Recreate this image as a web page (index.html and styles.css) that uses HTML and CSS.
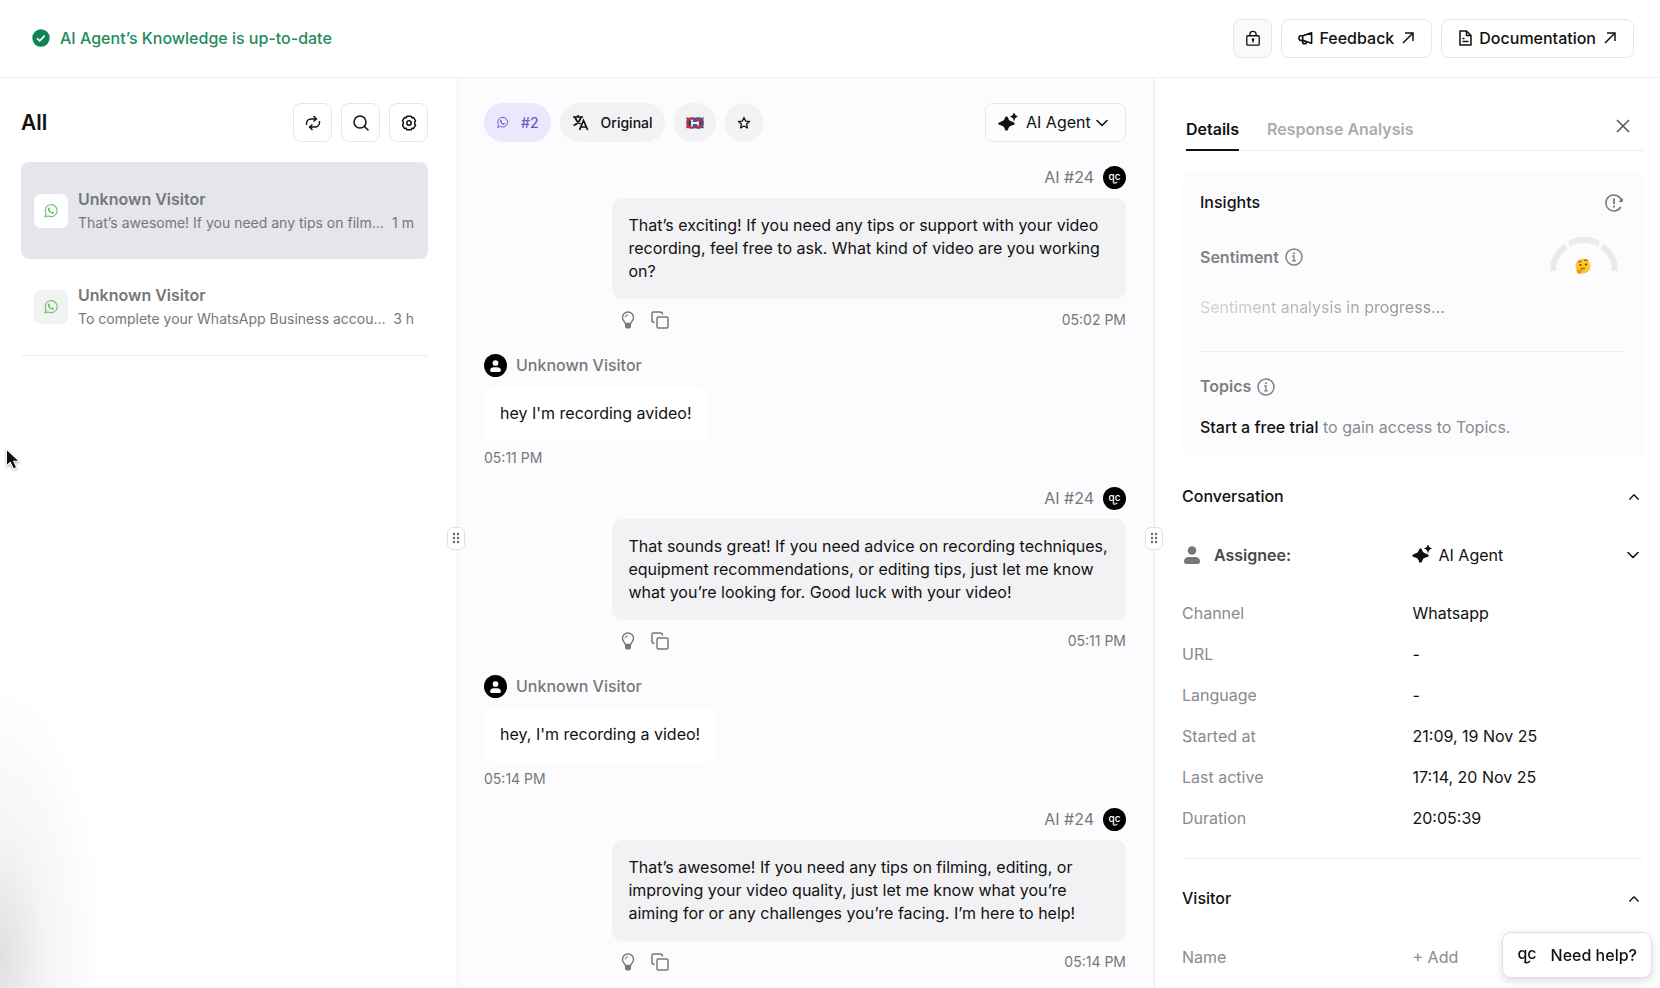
FILE: index.html
```html
<!DOCTYPE html>
<html lang="en">
<head>
    <meta charset="UTF-8">
    <meta name="viewport" content="width=device-width, initial-scale=1.0">
    <title>Inbox</title>
    <link rel="stylesheet" href="styles.css">
</head>
<body>
    <!-- shared icons -->
    <svg class="sprite" aria-hidden="true">
        <symbol id="whatsapp" viewBox="0 0 24 24">
            <path d="M3 21l1.6-4.8A9 9 0 1 1 8 19.4z" fill="none" stroke="currentColor" stroke-width="1.8" stroke-linejoin="round"/>
            <path d="M8.3 7.2c.7-.6 1.4-.4 1.7.3l.6 1.4c.2.5-.5 1-.8 1.5.7 1.5 1.8 2.6 3.4 3.3.5-.4 1-1.2 1.5-.9l1.5.8c.7.4.5 1.1 0 1.7-1 1.1-2.5 1-4.2.2-2.2-1-3.8-2.7-4.5-4.7-.4-1.400-.2-2.800.8-3.600z" fill="currentColor"/>
        </symbol>
        <symbol id="sparkle" viewBox="0 0 20 20">
            <path d="M8.500 3.500c.8 0 1.200.5 1.500 1.200.7 2.300 1.600 3.200 3.800 3.900l2 .8c1.200.5 1.200 1.900 0 2.400l-2 .8c-2.200.7-3.100 1.600-3.800 3.900-.5 1.600-2.500 1.600-3 0-.7-2.300-1.600-3.200-3.800-3.900l-2-.8c-1.200-.5-1.200-1.900 0-2.400l2-.8C5.400 7.900 6.300 7 7 4.700c.3-.7.7-1.200 1.500-1.200z"/>
            <path d="M16 1c.4 1.500.7 1.900 2.200 2.500C16.700 4.100 16.400 4.500 16 6c-.4-1.500-.7-1.900-2.200-2.500C15.300 2.900 15.600 2.500 16 1z" stroke="currentColor" stroke-width="1.400"/>
        </symbol>
        <symbol id="chevron" viewBox="0 0 14 14">
            <path d="M2 4.500l5 5 5-5" fill="none" stroke="currentColor" stroke-width="1.600" stroke-linecap="round" stroke-linejoin="round"/>
        </symbol>
        <symbol id="arrow" viewBox="0 0 14 14">
            <path d="M2 12L12 2M4 2h8v8" fill="none" stroke="currentColor" stroke-width="1.500"/>
        </symbol>
        <symbol id="info" viewBox="0 0 18 18">
            <circle cx="9" cy="9" r="8" fill="none" stroke="currentColor" stroke-width="1.500"/>
            <path d="M7.300 8H9v4.800M7 12.800h4" fill="none" stroke="currentColor" stroke-width="1.300"/>
            <circle cx="9" cy="5.300" r="1"/>
        </symbol>
        <symbol id="bulb" viewBox="0 0 18 18">
            <path d="M6.300 12.500C6 10.700 3.500 9.500 3.500 6.500a5.500 5.500 0 0 1 11 0c0 3-2.500 4.200-2.800 6z" fill="none" stroke="currentColor" stroke-width="1.400"/>
            <path d="M6 13h6v2.500a2 2 0 0 1-2 2H8a2 2 0 0 1-2-2z"/>
            <path d="M6.200 6.500A2.700 2.700 0 0 1 9 3.900" fill="none" stroke="currentColor"/>
        </symbol>
        <symbol id="copy" viewBox="0 0 18 18">
            <rect x="6" y="6" width="11" height="11" rx="1.500" fill="none" stroke="currentColor" stroke-width="1.500"/>
            <path d="M3.500 11.500A2.500 2.500 0 0 1 1 9V2.500A1.500 1.500 0 0 1 2.500 1H9a2.500 2.500 0 0 1 2.500 2.500" fill="none" stroke="currentColor" stroke-width="1.500"/>
        </symbol>
        <symbol id="person" viewBox="0 0 16 18">
            <circle cx="8" cy="4.500" r="4.300"/>
            <path d="M0 15.500C0 12 3 11 5 11h6c2 0 5 1 5 4.500C16 17 15.300 18 14 18H2c-1.300 0-2-1-2-2.500z"/>
        </symbol>
        <symbol id="grip" viewBox="0 0 8 12">
            <circle cx="2" cy="2" r="1.200"/><circle cx="6" cy="2" r="1.200"/>
            <circle cx="2" cy="6" r="1.200"/><circle cx="6" cy="6" r="1.200"/>
            <circle cx="2" cy="10" r="1.200"/><circle cx="6" cy="10" r="1.200"/>
        </symbol>
        <symbol id="smile" viewBox="0 0 8 4">
            <path d="M1 2q3.500 2 6-1" fill="none" stroke="currentColor" stroke-width="1.400"/>
        </symbol>
    </svg>

    <header class="topbar">
        <div class="status">
            <svg width="18" height="18" viewBox="0 0 18 18"><circle cx="9" cy="9" r="8.700" fill="#0d8552"/><path d="M5 9.300l2.700 2.600 5-5.200" fill="none" stroke="#fff" stroke-width="1.700"/></svg>
            <span>AI Agent’s Knowledge is up-to-date</span>
        </div>
        <nav class="topbar-actions">
            <button class="btn icon-btn muted" aria-label="Privacy">
                <svg width="16" height="16" viewBox="0 0 16 18" fill="none" stroke="currentColor" stroke-width="1.500"><rect x="1" y="6.500" width="14" height="10.500" rx="1"/><path d="M4.500 6.500V5a3.500 3.500 0 0 1 7 0v1.500M8 11v3"/><circle cx="8" cy="10.800" r=".8"/></svg>
            </button>
            <a class="btn" href="#">
                <svg width="15" height="15" viewBox="0 0 16 16" fill="none" stroke="currentColor" stroke-width="1.700" stroke-linejoin="round"><path d="M5 5l9.500-3v11L5 10H2.800C1.500 10 1 9 1 7.500S1.500 5 2.800 5zM5 5v5M4.500 10.500l1 3h3l.8-1.800"/></svg>
                <span>Feedback</span>
                <svg class="out" width="14" height="14"><use href="#arrow"/></svg>
            </a>
            <a class="btn" href="#">
                <svg width="15" height="16" viewBox="0 0 15 16" fill="none" stroke="currentColor" stroke-width="1.500" stroke-linejoin="round"><path d="M2 1h6.500L13 5.500V15H2zM8.500 1v4.500H13M4.500 8.500h2M4.500 11.500h6"/></svg>
                <span>Documentation</span>
                <svg class="out" width="14" height="14"><use href="#arrow"/></svg>
            </a>
        </nav>
    </header>

    <main class="layout">
        <aside class="inbox">
            <div class="inbox-head">
                <h1>All</h1>
                <button class="btn icon-btn" aria-label="Refresh">
                    <svg width="16" height="16" viewBox="0 0 16 16" fill="none" stroke="currentColor" stroke-width="1.400"><path d="M1.500 10V8.500A4.500 4.500 0 0 1 6 4h5M8.500 1l3 3-3 2.500M14.500 6v1.500A4.500 4.500 0 0 1 10 12H5M7.500 9.500l-3 2.500 3 3"/></svg>
                </button>
                <button class="btn icon-btn" aria-label="Search">
                    <svg width="16" height="16" viewBox="0 0 16 16" fill="none" stroke="currentColor" stroke-width="1.500" stroke-linecap="round"><circle cx="7" cy="7" r="6"/><path d="M11.500 11.500L15 15"/></svg>
                </button>
                <button class="btn icon-btn" aria-label="Settings">
                    <svg width="16" height="16" viewBox="0 0 16 16" fill="none" stroke="currentColor" stroke-width="1.500" stroke-linejoin="round"><path d="M6 1.200h4l.8 1.500 1.800-.1 1.900 3-.8 1.600v1.600l.8 1.600-1.900 3-1.800-.1-.8 1.500H6l-.8-1.500-1.800.1-1.900-3 .8-1.600V7.200l-.8-1.600 1.900-3 1.800.1z"/><circle cx="8" cy="8" r="2.200"/></svg>
                </button>
            </div>
            <a class="thread active" href="#">
                <span class="channel"><svg width="16" height="16"><use href="#whatsapp"/></svg></span>
                <span class="thread-body">
                    <strong>Unknown Visitor</strong>
                    <span class="preview"><span>That’s awesome! If you need any tips on film...</span><time>1 m</time></span>
                </span>
            </a>
            <a class="thread" href="#">
                <span class="channel"><svg width="16" height="16"><use href="#whatsapp"/></svg></span>
                <span class="thread-body">
                    <strong>Unknown Visitor</strong>
                    <span class="preview"><span>To complete your WhatsApp Business accou...</span><time>3 h</time></span>
                </span>
            </a>
        </aside>

        <section class="chat">
            <button class="resizer" aria-label="Resize inbox"><svg width="8" height="12"><use href="#grip"/></svg></button>
            <div class="chat-head">
                <button class="chip violet"><svg width="13" height="13"><use href="#whatsapp"/></svg>#2</button>
                <button class="chip">
                    <svg width="17" height="17" viewBox="0 0 17 17" fill="none" stroke="currentColor" stroke-width="1.700"><path d="M1 3h10M6 1v2M9 3c-.8 3.500-4 7-7.500 8.500M3.200 3.500C4 6.500 6 8.500 8.500 10M7.500 16l4-9.500 4.200 9.500M9 13h5.300"/></svg>
                    Original
                </button>
                <button class="chip" aria-label="Country">
                    <svg width="18" height="12" viewBox="0 0 18 12"><path d="M0 0l4 2 2 4-2 4-4 1.500 1-3V3z" fill="#333a63"/><path d="M18 0l-4 2-2 4 2 4 4 1.500-1-3V3z" fill="#8e2b45"/><rect x="1.500" y="1.500" width="8.500" height="9" rx="3.500" fill="none" stroke="#c4303a" stroke-width="2.600"/><rect x="8" y="1.500" width="8.500" height="9" rx="3.500" fill="none" stroke="#2e5ca6" stroke-width="2.600"/><path d="M10 3.200h6.500M11 9.500h5.500" stroke="#c4303a" stroke-width="2"/><path d="M5 6h8" stroke="#f4f4fa" stroke-width="2"/></svg>
                </button>
                <button class="chip" aria-label="Favourite">
                    <svg width="14" height="14" viewBox="0 0 14 14" fill="none" stroke="currentColor" stroke-width="1.300" stroke-linejoin="round"><path d="M7 1.500l1.600 3.600 3.900.4-2.900 2.600.8 3.900L7 10l-3.400 2 .8-3.900-2.900-2.600 3.900-.4z"/></svg>
                </button>
                <label class="btn agent-select">
                    <svg width="20" height="20"><use href="#sparkle"/></svg>
                    <select aria-label="Replying as"><option>AI Agent</option></select>
                    <svg width="14" height="14"><use href="#chevron"/></svg>
                </label>
            </div>

            <div class="messages">
                <article class="message ai">
                    <div class="author">AI #24 <span class="avatar"><span>qc</span><svg width="6" height="3"><use href="#smile"/></svg></span></div>
                    <p class="bubble">That’s exciting! If you need any tips or support with your video recording, feel free to ask. What kind of video are you working on?</p>
                    <div class="meta">
                        <button aria-label="Suggest"><svg width="18" height="18"><use href="#bulb"/></svg></button>
                        <button aria-label="Copy"><svg width="18" height="18"><use href="#copy"/></svg></button>
                        <time>05:02 PM</time>
                    </div>
                </article>
                <article class="message visitor">
                    <div class="author"><span class="avatar"><svg width="11" height="12"><use href="#person"/></svg></span> Unknown Visitor</div>
                    <p class="bubble">hey I'm recording avideo!</p>
                    <div class="meta"><time>05:11 PM</time></div>
                </article>
                <article class="message ai">
                    <div class="author">AI #24 <span class="avatar"><span>qc</span><svg width="6" height="3"><use href="#smile"/></svg></span></div>
                    <p class="bubble">That sounds great! If you need advice on recording techniques, equipment recommendations, or editing tips, just let me know what you’re looking for. Good luck with your video!</p>
                    <div class="meta">
                        <button aria-label="Suggest"><svg width="18" height="18"><use href="#bulb"/></svg></button>
                        <button aria-label="Copy"><svg width="18" height="18"><use href="#copy"/></svg></button>
                        <time>05:11 PM</time>
                    </div>
                </article>
                <article class="message visitor">
                    <div class="author"><span class="avatar"><svg width="11" height="12"><use href="#person"/></svg></span> Unknown Visitor</div>
                    <p class="bubble">hey, I'm recording a video!</p>
                    <div class="meta"><time>05:14 PM</time></div>
                </article>
                <article class="message ai">
                    <div class="author">AI #24 <span class="avatar"><span>qc</span><svg width="6" height="3"><use href="#smile"/></svg></span></div>
                    <p class="bubble">That’s awesome! If you need any tips on filming, editing, or improving your video quality, just let me know what you’re aiming for or any challenges you’re facing. I’m here to help!</p>
                    <div class="meta">
                        <button aria-label="Suggest"><svg width="18" height="18"><use href="#bulb"/></svg></button>
                        <button aria-label="Copy"><svg width="18" height="18"><use href="#copy"/></svg></button>
                        <time>05:14 PM</time>
                    </div>
                </article>
            </div>
        </section>

        <aside class="details">
            <button class="resizer" aria-label="Resize details"><svg width="8" height="12"><use href="#grip"/></svg></button>
            <div class="tabs">
                <button class="tab active">Details</button>
                <button class="tab">Response Analysis</button>
                <button class="close" aria-label="Close">
                    <svg width="14" height="14" viewBox="0 0 14 14" fill="none" stroke="currentColor" stroke-width="1.500"><path d="M1 1l12 12M13 1L1 13"/></svg>
                </button>
            </div>

            <section class="insights">
                <div class="row">
                    <h2>Insights</h2>
                    <button class="plain" aria-label="Refresh insights">
                        <svg width="18" height="18" viewBox="0 0 18 18" fill="none" stroke="currentColor" stroke-width="1.500"><path d="M15.800 13A8 8 0 1 1 16.500 6.500"/><path d="M14.300 7.500h3v-3z" fill="currentColor" stroke-width="1"/><path d="M9 4.500v5.500M9 11.500v2" stroke-width="1.800"/></svg>
                    </button>
                </div>
                <div class="row sentiment">
                    <h3>Sentiment <svg width="18" height="18"><use href="#info"/></svg></h3>
                    <svg class="gauge" width="70" height="40" viewBox="0 0 70 40">
                        <g fill="none" stroke="#ebebec" stroke-width="6">
                            <path d="M4 36A31 31 0 0 1 17 11"/>
                            <path d="M20 8.800A31 31 0 0 1 50 8.800"/>
                            <path d="M53 11A31 31 0 0 1 66 36"/>
                        </g>
                        <circle cx="34" cy="31" r="7.500" fill="#fdc92f"/>
                        <path d="M29 27.500q1.500-2 3.500-.8M35 25.500q2-1.500 4 .3M31 34q3-1.500 5-.5" fill="none" stroke="#7a4b12"/>
                        <circle cx="31.500" cy="30" r="1" fill="#4a2c0c"/><circle cx="37" cy="29.500" r="1" fill="#4a2c0c"/>
                        <path d="M28.500 34c1-.6 1.500.3 1.800 1.200l4-.8c1-.1 1.200 1.100.3 1.400l-1.800.5c1 1-1 3-3 2.500s-3-3.500-1.300-4.800z" fill="#f29a1c"/>
                    </svg>
                </div>
                <p class="progress">Sentiment analysis in progress...</p>
                <h3>Topics <svg width="18" height="18"><use href="#info"/></svg></h3>
                <p class="trial"><a href="#">Start a free trial</a> to gain access to Topics.</p>
            </section>

            <section class="group">
                <div class="row group-head">
                    <h2>Conversation</h2>
                    <button class="plain up" aria-label="Collapse conversation"><svg width="12" height="12"><use href="#chevron"/></svg></button>
                </div>
                <div class="assignee">
                    <label for="assignee"><svg width="16" height="18"><use href="#person"/></svg>Assignee:</label>
                    <div class="assignee-value">
                        <svg width="20" height="20"><use href="#sparkle"/></svg>
                        <select id="assignee"><option>AI Agent</option></select>
                        <svg width="14" height="14"><use href="#chevron"/></svg>
                    </div>
                </div>
                <dl class="facts">
                    <dt>Channel</dt><dd>Whatsapp</dd>
                    <dt>URL</dt><dd>-</dd>
                    <dt>Language</dt><dd>-</dd>
                    <dt>Started at</dt><dd>21:09, 19 Nov 25</dd>
                    <dt>Last active</dt><dd>17:14, 20 Nov 25</dd>
                    <dt>Duration</dt><dd>20:05:39</dd>
                </dl>
            </section>

            <section class="group">
                <div class="row group-head">
                    <h2>Visitor</h2>
                    <button class="plain up" aria-label="Collapse visitor"><svg width="12" height="12"><use href="#chevron"/></svg></button>
                </div>
                <dl class="facts visitor-facts">
                    <dt>Name</dt><dd><button class="add">+ Add</button></dd>
                </dl>
            </section>
        </aside>
    </main>

    <button class="help">
        <span class="logo"><span>qc</span><svg width="8" height="4"><use href="#smile"/></svg></span>
        Need help?
    </button>
    <div class="corner-shade"></div>
    <svg class="pointer" width="20" height="26" viewBox="0 0 18 24"><path d="M2 2v15.500l3.500-3.200 3 6 3-1.400-2.700-5.700H14z" stroke="#fff" stroke-width="1"/></svg>
</body>
</html>
```
FILE: styles.css
```css
* {
    box-sizing: border-box;
}
body {
    margin: 0;
    height: 100vh;
    display: flex;
    flex-direction: column;
    overflow: hidden;
    font-family: Inter, "Liberation Sans", sans-serif;
    font-size: 16px;
    line-height: 23px;
    color: #111;
    background-color: #fff;
}
h1, h2, h3, p, dl, dd {
    margin: 0;
}
h2, h3 {
    font-size: 16px;
    font-weight: 500;
}
h3 {
    display: flex;
    align-items: center;
    gap: 6px;
    font-weight: 600;
    color: #808083;
}
svg {
    flex-shrink: 0;
    fill: currentColor;
}
svg[fill="none"] {
    fill: none;
}
button, select {
    font: inherit;
    color: inherit;
    background: none;
    border: 0;
    padding: 0;
}
select {
    appearance: none;
}
a {
    color: inherit;
    text-decoration: none;
}
.sprite {
    position: absolute;
    width: 0;
    height: 0;
}

/* top bar */
.topbar {
    display: flex;
    align-items: center;
    justify-content: space-between;
    height: 78px;
    padding: 0 26px 1px 32px;
    border-bottom: 1px solid #eeeeef;
}
.status {
    display: flex;
    align-items: center;
    gap: 10px;
    font-weight: 500;
    color: #258a5d;
}
.topbar-actions {
    display: flex;
    gap: 9px;
}
.btn {
    display: flex;
    align-items: center;
    justify-content: center;
    gap: 6px;
    height: 39px;
    padding: 0 16px;
    border: 1px solid #e6e6e8;
    border-radius: 8px;
    background-color: #fff;
    font-weight: 500;
}
.btn .out {
    margin-left: 1px;
}
.icon-btn {
    width: 39px;
    padding: 0;
}
.muted {
    background-color: #fafafa;
}

.layout {
    flex: 1;
    min-height: 0;
    display: grid;
    grid-template-columns: 456px minmax(0, 1fr) 506px;
}

/* inbox */
.inbox {
    padding: 25px 28px 0 21px;
}
.inbox-head {
    display: flex;
    align-items: center;
    gap: 9px;
    margin-bottom: 20px;
}
.inbox-head h1 {
    flex: 1;
    font-size: 21px;
    font-weight: 600;
}
.thread {
    display: flex;
    align-items: center;
    gap: 10px;
    height: 97px;
    padding: 0 14px 0 13px;
    border-bottom: 1px solid #ededee;
    color: #77777a;
}
.thread.active {
    border: 0;
    border-radius: 8px;
    background-color: #e5e5ec;
}
.channel {
    display: flex;
    align-items: center;
    justify-content: center;
    width: 34px;
    height: 34px;
    border-radius: 7px;
    background-color: #f2f2f3;
    color: #6cc56e;
}
.active .channel {
    background-color: #fff;
}
.thread-body {
    flex: 1;
    min-width: 0;
}
.thread strong {
    display: block;
    font-weight: 600;
}
.preview {
    display: flex;
    justify-content: space-between;
    font-size: 14px;
    white-space: nowrap;
}

/* chat */
.chat {
    position: relative;
    display: flex;
    flex-direction: column;
    padding: 25px 28px 0 25px;
    border-left: 3px solid #f8f8f9;
    background-color: #fcfcfe;
}
.chat-head {
    display: flex;
    align-items: center;
    gap: 9px;
    margin-bottom: 24px;
}
.chip {
    display: flex;
    align-items: center;
    gap: 12px;
    height: 39px;
    padding: 0 12px;
    border-radius: 20px;
    background-color: #f2f2f4;
    font-size: 14px;
    font-weight: 500;
}
.chip.violet {
    background-color: #ebe8fd;
    color: #6b5cc4;
}
.agent-select {
    margin-left: auto;
    background-color: #fdfdfe;
    font-weight: 400;
    padding: 0 16px 0 12px;
    gap: 4px;
}
.agent-select select {
    margin-left: 4px;
}
.messages {
    display: flex;
    flex-direction: column;
    gap: 20px;
    min-height: 0;
    overflow: hidden;
}
.message {
    display: flex;
    flex-direction: column;
    align-items: flex-start;
    gap: 9px;
}
.message.ai {
    align-self: flex-end;
    width: 80%;
}
.message.visitor {
    margin: 3px 0 -2px;
}
.visitor .meta {
    margin-top: -4px;
}
.author {
    display: flex;
    align-items: center;
    gap: 9px;
    height: 23px;
    color: #77777a;
}
.visitor .author {
    font-weight: 500;
}
.ai .author {
    align-self: flex-end;
}
.avatar {
    display: flex;
    flex-direction: column;
    align-items: center;
    justify-content: center;
    width: 23px;
    height: 23px;
    border-radius: 50%;
    background-color: #000;
    color: #fff;
    font-size: 10px;
    font-weight: 500;
    line-height: 10px;
}
.bubble {
    padding: 16px;
    border-radius: 10px;
    background-color: #fff;
}
.ai .bubble {
    width: 100%;
    background-color: #f2f2f4;
}
.meta {
    display: flex;
    align-items: center;
    gap: 14px;
    height: 23px;
    color: #77777a;
    font-size: 14px;
}
.ai .meta {
    width: 100%;
    padding-left: 7px;
}
.ai .meta time {
    margin-left: auto;
}
.meta button {
    display: flex;
}

.resizer {
    position: absolute;
    top: 50%;
    left: -12px;
    display: flex;
    align-items: center;
    justify-content: center;
    width: 18px;
    height: 23px;
    margin-top: -11px;
    border: 1px solid #e2e2e4;
    border-radius: 6px;
    background-color: #fff;
    color: #666;
}

/* details */
.details {
    position: relative;
    min-width: 0;
    padding: 30px 16px 0 27px;
    border-left: 1px solid #e9e9eb;
}
.details .resizer {
    left: -10px;
}
.tabs {
    display: flex;
    gap: 28px;
    height: 43px;
    margin-left: 4px;
    border-bottom: 1px solid #eeeeef;
}
.tab {
    height: 43px;
    padding-top: 1px;
    border-bottom: 2px solid transparent;
    font-weight: 600;
    color: #acacae;
}
.tab.active {
    border-color: #111;
    color: #111;
}
.close {
    display: flex;
    align-items: center;
    margin-left: auto;
    padding: 0 14px 6px;
    color: #555;
}
.row {
    display: flex;
    align-items: center;
    justify-content: space-between;
}
.plain {
    display: flex;
}
.insights {
    margin-top: 22px;
    padding: 18px 21px 18px 18px;
    border-radius: 8px;
    background-color: #fcfcfe;
}
.insights .plain {
    color: #77777a;
}
.sentiment {
    height: 40px;
    margin-top: 23px;
}
.gauge {
    margin: 0 4px 4px 0;
}
.progress {
    margin-top: 19px;
    padding-bottom: 32px;
    border-bottom: 1px solid #eeeeef;
    color: transparent;
    background: linear-gradient(90deg, #d4d4d6, #8a8a8d 240px) text;
}
.insights > h3 {
    margin-top: 23px;
}
.trial {
    margin-top: 18px;
    color: #8a8a8d;
}
.trial a {
    font-weight: 500;
    color: #111;
}
.group {
    margin-right: 1px;
    padding-bottom: 28px;
}
.group + .group {
    border-top: 1px solid #eeeeef;
}
.group-head {
    padding: 28px 3px 0 0;
}
.up {
    transform: rotate(180deg);
}
.assignee {
    display: grid;
    grid-template-columns: 1fr 1fr;
    align-items: center;
    height: 40px;
    margin-top: 27px;
    color: #48484b;
}
.assignee label {
    display: flex;
    align-items: center;
    gap: 14px;
    padding-left: 2px;
    font-weight: 600;
}
.assignee label svg {
    color: #77777a;
}
.assignee-value {
    display: flex;
    align-items: center;
    gap: 7px;
    margin-left: -1px;
    color: #111;
}
.assignee-value select {
    flex: 1;
}
.assignee-value svg:last-child {
    margin-right: 3px;
}
.facts {
    display: grid;
    grid-template-columns: 1fr 1fr;
    row-gap: 18px;
    margin-top: 27px;
}
.facts dt {
    color: #8a8a8d;
}
.visitor-facts {
    margin-top: 36px;
}
.add {
    color: #8a8a8d;
}

/* floating bits */
.help {
    position: fixed;
    right: 8px;
    bottom: 10px;
    display: flex;
    align-items: center;
    gap: 14px;
    height: 46px;
    padding: 0 14px;
    border: 1px solid #dfdfe1;
    border-radius: 9px;
    background-color: #fff;
    box-shadow: 0 3px 8px rgba(0, 0, 0, 0.14);
    font-weight: 500;
}
.logo {
    display: flex;
    flex-direction: column;
    align-items: center;
    line-height: 14px;
}
.corner-shade {
    position: fixed;
    left: 0;
    bottom: 0;
    width: 110px;
    height: 320px;
    background: radial-gradient(ellipse 105px 270px at 0 90%, rgba(0, 0, 0, 0.12), rgba(0, 0, 0, 0.04) 45%, transparent);
    pointer-events: none;
}
.pointer {
    position: fixed;
    left: 4px;
    top: 447px;
    filter: drop-shadow(0 1px 1px rgba(0, 0, 0, 0.3));
    pointer-events: none;
}
```
